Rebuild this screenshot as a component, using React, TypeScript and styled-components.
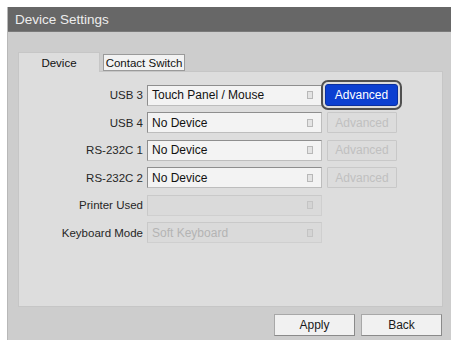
import React from "react";
import styled, { createGlobalStyle } from "styled-components";

const Global = createGlobalStyle`
  html, body { margin: 0; padding: 0; background: #ffffff; }
  body { font-family: "Liberation Sans", Arial, sans-serif; }
`;

const Page = styled.div`
  width: 451px;
  height: 340px;
  padding: 7px 0 0 7px;
  box-sizing: border-box;
  background: #ffffff;
  overflow: hidden;
`;

const Window = styled.div`
  height: 333px;
  display: flex;
  flex-direction: column;
  background: #cdcdcd;
  border-left: 1px solid #b8b8b8;
`;

const TitleBar = styled.div`
  height: 25px;
  flex: none;
  background: #676767;
  color: #ededed;
  font-size: 13.5px;
  display: flex;
  align-items: center;
  padding-left: 7px;
  border-bottom: 1px solid #7a7a7a;
  box-sizing: border-box;
`;

const Body = styled.div`
  padding: 20px 8px 0 10px;
  display: flex;
  flex-direction: column;
`;

const Tabs = styled.div`
  display: flex;
  gap: 3px;
  align-items: flex-end;
  height: 19px;
`;

const Tab = styled.div<{ $active?: boolean }>`
  width: 82px;
  height: ${(p) => (p.$active ? "20px" : "17px")};
  box-sizing: border-box;
  display: flex;
  align-items: center;
  justify-content: center;
  font-size: 11.5px;
  color: #111;
  background: ${(p) => (p.$active ? "#dddddd" : "#f2f2f2")};
  border: 1px solid ${(p) => (p.$active ? "#c6c6c6" : "#9a9a9a")};
  border-bottom: ${(p) => (p.$active ? "none" : "1px solid #9a9a9a")};
  margin-bottom: ${(p) => (p.$active ? "-1px" : "0")};
  position: relative;
  z-index: ${(p) => (p.$active ? 1 : 0)};
`;

const Panel = styled.div`
  height: 236px;
  box-sizing: border-box;
  background: #dddddd;
  border: 1px solid #c6c6c6;
  padding-top: 13px;
`;

const Form = styled.div`
  display: grid;
  grid-template-columns: 125px 175px 76px;
  column-gap: 3px;
  row-gap: 7.5px;
  grid-auto-rows: 20px;
  align-items: center;
`;

const Label = styled.div`
  font-size: 11.5px;
  color: #262626;
  text-align: right;
  padding-right: 1px;
`;

const Select = styled.div<{ $disabled?: boolean }>`
  height: 21px;
  box-sizing: border-box;
  display: flex;
  align-items: center;
  justify-content: space-between;
  padding: 0 8px 0 4px;
  font-size: 12px;
  color: ${(p) => (p.$disabled ? "#b4b4b4" : "#111")};
  background: ${(p) => (p.$disabled ? "#dadada" : "#f3f3f3")};
  border: 1px solid ${(p) => (p.$disabled ? "#c9c9c9" : "#8e8e8e")};
  border-right-color: ${(p) => (p.$disabled ? "#cfcfcf" : "#bdbdbd")};
  border-bottom-color: ${(p) => (p.$disabled ? "#cfcfcf" : "#bdbdbd")};
`;

const Arrow = styled.span<{ $disabled?: boolean }>`
  width: 4px;
  height: 6px;
  border: 1px solid ${(p) => (p.$disabled ? "#c4c4c4" : "#b8b8b8")};
  background: ${(p) => (p.$disabled ? "#d4d4d4" : "#e4e4e4")};
`;

const AdvButton = styled.div<{ $focused?: boolean }>`
  height: ${(p) => (p.$focused ? "22px" : "21px")};
  width: ${(p) => (p.$focused ? "73px" : "70px")};
  margin-left: ${(p) => (p.$focused ? "0" : "2px")};
  box-sizing: border-box;
  display: flex;
  align-items: center;
  justify-content: center;
  font-size: 12px;
  border-radius: ${(p) => (p.$focused ? "3px" : "1px")};
  color: ${(p) => (p.$focused ? "#ffffff" : "#c0c0c0")};
  background: ${(p) => (p.$focused ? "#0b3fd1" : "#dcdcdc")};
  border: 1px solid ${(p) => (p.$focused ? "#0a2f9e" : "#c8c8c8")};
  outline: ${(p) => (p.$focused ? "2px solid #505050" : "none")};
  outline-offset: 2px;
  box-shadow: ${(p) => (p.$focused ? "0 0 0 2px #dcdcdc" : "none")};
`;

const Footer = styled.div`
  display: flex;
  justify-content: flex-end;
  gap: 6px;
  padding: 7px 1px 0 0;
`;

const FooterButton = styled.div`
  width: 81px;
  height: 22px;
  box-sizing: border-box;
  display: flex;
  align-items: center;
  justify-content: center;
  font-size: 12px;
  color: #1a1a1a;
  background: #f1f1f1;
  border: 1px solid #a8a8a8;
  border-right-color: #8a8a8a;
  border-bottom-color: #8a8a8a;
`;

type Row = { label: string; value: string; disabled?: boolean; adv?: "focused" | "disabled" };

const rows: Row[] = [
  { label: "USB 3", value: "Touch Panel / Mouse", adv: "focused" },
  { label: "USB 4", value: "No Device", adv: "disabled" },
  { label: "RS-232C 1", value: "No Device", adv: "disabled" },
  { label: "RS-232C 2", value: "No Device", adv: "disabled" },
  { label: "Printer Used", value: "", disabled: true },
  { label: "Keyboard Mode", value: "Soft Keyboard", disabled: true },
];

export default function App() {
  return (
    <>
      <Global />
      <Page>
        <Window>
          <TitleBar>Device Settings</TitleBar>
          <Body>
            <Tabs>
              <Tab $active>Device</Tab>
              <Tab>Contact Switch</Tab>
            </Tabs>
            <Panel>
              <Form>
                {rows.map((r) => (
                  <React.Fragment key={r.label}>
                    <Label>{r.label}</Label>
                    <Select $disabled={r.disabled}>
                      <span>{r.value}</span>
                      <Arrow $disabled={r.disabled} />
                    </Select>
                    {r.adv ? (
                      <AdvButton $focused={r.adv === "focused"}>Advanced</AdvButton>
                    ) : (
                      <span />
                    )}
                  </React.Fragment>
                ))}
              </Form>
            </Panel>
            <Footer>
              <FooterButton>Apply</FooterButton>
              <FooterButton>Back</FooterButton>
            </Footer>
          </Body>
        </Window>
      </Page>
    </>
  );
}
